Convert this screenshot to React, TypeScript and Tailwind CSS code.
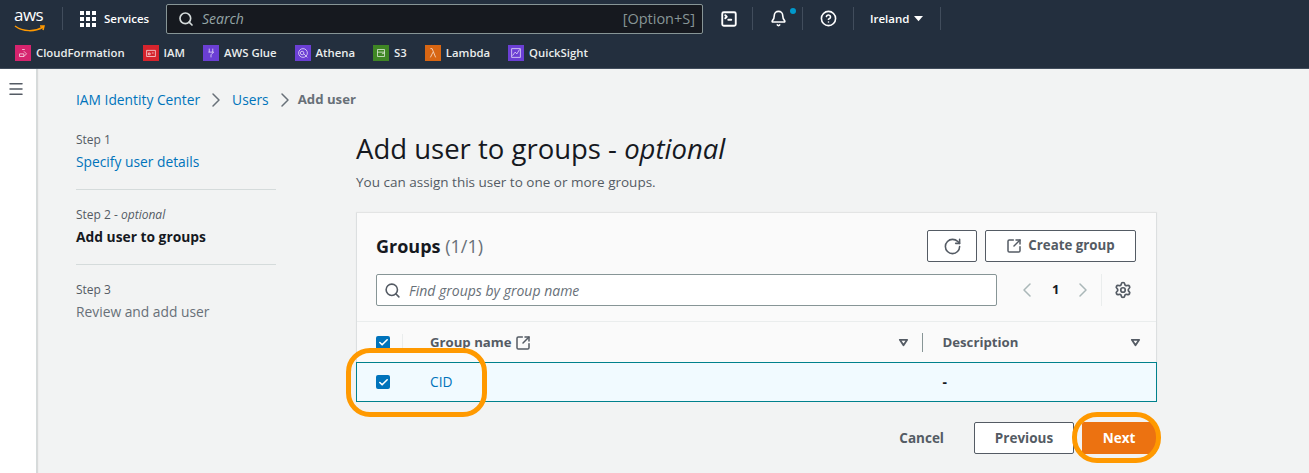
import {
  Bell,
  ChevronLeft,
  ChevronRight,
  CircleHelp,
  Check,
  Menu,
  RotateCw,
  Search,
  Settings,
  SquareArrowOutUpRight,
  SquareTerminal,
} from "lucide-react";

const favorites = [
  { name: "CloudFormation", bg: "bg-[#d6246e]", glyph: "M4 9h5v3H4zM9 6l3 3-3 3M7 4h3" },
  { name: "IAM", bg: "bg-[#d6242d]", glyph: "M3 5h10v7H3zM5 8h2v2H5zM9 8h2" },
  { name: "AWS Glue", bg: "bg-[#6b3fd4]", glyph: "M6 3v4M10 3v4M5 7h6l-3 3v3" },
  { name: "Athena", bg: "bg-[#6b3fd4]", glyph: "M8 3a5 5 0 1 0 0 10 5 5 0 0 0 0-10M7 6a2 2 0 1 0 0 4 2 2 0 0 0 0-4M9 9l4 4" },
  { name: "S3", bg: "bg-[#3f8624]", glyph: "M4 4h8v8H4zM4 7h8M9 9l3-1" },
  { name: "Lambda", bg: "bg-[#d86613]", glyph: "M5 3h2l4 10M8 7l-3 6" },
  { name: "QuickSight", bg: "bg-[#6b3fd4]", glyph: "M3 3h10v10H3zM4 11l3-4 2 2 3-5" },
];

const Triangle = ({ className }: { className: string }) => (
  <svg viewBox="0 0 12 10" className={className} fill="none" stroke="currentColor" strokeWidth="2">
    <path d="M2 2h8L6 8z" strokeLinejoin="round" />
  </svg>
);

const Checked = () => (
  <span className="flex size-[14px] items-center justify-center rounded-[2px] bg-[#0073bb]">
    <Check size={11} strokeWidth={3.5} className="text-white" />
  </span>
);

const Crumb = () => <ChevronRight size={24} strokeWidth={1.5} className="mx-[4px] text-[#687078]" />;

const Divider = () => <div className="h-[23px] w-px bg-[#414d5c]" />;

const steps = [
  { label: "Step 1", title: "Specify user details", tone: "text-[#0073bb]" },
  { label: "Step 2", optional: true, title: "Add user to groups", tone: "font-bold text-[#16191f]" },
  { label: "Step 3", title: "Review and add user", tone: "text-[#687078]" },
];

export default function App() {
  return (
    <div className="flex h-[473px] w-[1309px] flex-col overflow-hidden bg-[#f2f3f3] font-['Open_Sans',sans-serif] text-[13.8px] text-[#16191f]">
      <header className="h-[69px] shrink-0 border-b border-[#414d5c] bg-[#232f3e] text-white">
        <div className="flex h-[37px] items-center">
          <div className="relative ml-[14px] h-[30px] w-[32px]">
            <span className="absolute left-0 top-[1px] text-[17px] leading-[20px] tracking-[-0.5px]">aws</span>
            <svg viewBox="0 0 32 10" className="absolute left-0 top-[20px] w-[32px]" fill="none">
              <path d="M1 2c8 6 20 6 28 1M26 2h4l-1 4" stroke="#ff9900" strokeWidth="1.5" />
            </svg>
          </div>
          <div className="ml-[16px] h-[23px] w-px bg-[#414d5c]" />
          <div className="ml-[17px] grid size-[16px] grid-cols-3 gap-[2px]">
            {Array.from({ length: 9 }).map((_, i) => (
              <span key={i} className="bg-white" />
            ))}
          </div>
          <span className="ml-[8px] w-[45px] text-[11.5px] font-semibold">Services</span>
          <div className="ml-[17px] flex h-[30px] w-[537px] items-center rounded-[2px] border border-[#879596] bg-[#16191f] pl-[11px] pr-[7px]">
            <Search size={16} strokeWidth={2.5} className="text-[#d5dbdb]" />
            <span className="ml-[8px] text-[14px] italic text-[#95a5a6]">Search</span>
            <span className="ml-auto text-[14.5px] text-[#879596]">[Option+S]</span>
          </div>
          <SquareTerminal size={18} strokeWidth={2.5} className="ml-[17px]" />
          <div className="ml-[14px]"><Divider /></div>
          <div className="relative ml-[17px]">
            <Bell size={17} strokeWidth={2.25} />
            <span className="absolute -right-[9px] -top-[2px] size-[6px] rounded-full bg-[#0099cc]" />
          </div>
          <div className="ml-[15px]"><Divider /></div>
          <CircleHelp size={17} strokeWidth={2.25} className="ml-[17px]" />
          <div className="ml-[16px]"><Divider /></div>
          <span className="ml-[16px] text-[11.5px] font-semibold">Ireland</span>
          <svg viewBox="0 0 10 8" className="ml-[5px] w-[9px]" fill="white">
            <path d="M0 1h10L5 7z" />
          </svg>
          <div className="ml-[17px]"><Divider /></div>
        </div>
        <div className="flex h-[31px] items-center pl-[15px] pt-[1px]">
          {favorites.map((f) => (
            <div key={f.name} className="mr-[18px] flex items-center gap-[5px]">
              <span className={`flex size-[16px] items-center justify-center ${f.bg}`}>
                <svg viewBox="0 0 16 16" className="size-[14px]" fill="none" stroke="#ffffff" strokeOpacity="0.75" strokeWidth="1">
                  <path d={f.glyph} />
                </svg>
              </span>
              <span className="text-[11.35px] font-semibold text-[#eaeded]">{f.name}</span>
            </div>
          ))}
        </div>
      </header>

      <div className="flex min-h-0 flex-1">
        <aside className="w-[37px] shrink-0 border-r border-[#d5dbdb] bg-white pl-[7px] pt-[11px] shadow-[1px_0_1px_rgba(0,0,0,0.1)]">
          <Menu size={18} strokeWidth={2} className="text-[#545b64]" />
        </aside>

        <main className="relative flex-1 pl-[39px]">
          <nav className="mt-[19px] flex h-[24px] items-center">
            <span className="text-[#0073bb]">IAM Identity Center</span>
            <Crumb />
            <span className="text-[#0073bb]">Users</span>
            <Crumb />
            <span className="-ml-[3px] text-[13.2px] font-bold text-[#687078]">Add user</span>
          </nav>

          <div className="flex">
            <ol className="w-[200px] shrink-0 pt-[19px]">
              {steps.map((s, i) => (
                <li key={s.label} className={i < 2 ? "mb-[16px] h-[59px] border-b border-[#d5dbdb]" : ""}>
                  <div className="h-[18px] text-[12px] leading-[18px] text-[#545b64]">
                    {s.label}
                    {s.optional && (
                      <>
                        {" - "}
                        <em>optional</em>
                      </>
                    )}
                  </div>
                  <div className={`mt-[2px] leading-[22px] ${s.tone}`}>{s.title}</div>
                </li>
              ))}
            </ol>

            <section className="ml-[80px] w-[801px]">
              <h1 className="mt-[19px] text-[27.5px] leading-[36px]">
                Add user to groups - <em>optional</em>
              </h1>
              <p className="mt-[6px] text-[13.5px] leading-[18px] text-[#545b64]">You can assign this user to one or more groups.</p>

              <div className="mt-[22px] border-l border-r border-[#dcdfe0] shadow-[0_-1px_1px_rgba(0,0,0,0.06)]">
                <div className="h-[109px] border-b border-[#eaeded] bg-[#fafafa] pl-[19px] pr-[20px] pt-[17px]">
                  <div className="flex h-[32px] items-center">
                    <h2 className="text-[18px] font-bold">
                      Groups <span className="font-normal text-[#687078]">(1/1)</span>
                    </h2>
                    <button className="ml-auto flex h-[32px] w-[50px] items-center justify-center rounded-[2px] border border-[#545b64] bg-white">
                      <RotateCw size={19} strokeWidth={2} className="text-[#545b64]" />
                    </button>
                    <button className="ml-[8px] flex h-[32px] w-[151px] items-center justify-center gap-[6px] rounded-[2px] border border-[#545b64] bg-white text-[13.3px] font-bold text-[#545b64]">
                      <SquareArrowOutUpRight size={16} strokeWidth={2.25} />
                      Create group
                    </button>
                  </div>
                  <div className="mt-[12px] flex h-[32px] items-center">
                    <div className="flex h-[32px] w-[621px] items-center rounded-[2px] border border-[#879596] bg-white pl-[7px]">
                      <Search size={17} strokeWidth={2.25} className="text-[#545b64]" />
                      <span className="ml-[8px] text-[14px] italic text-[#687078]">Find groups by group name</span>
                    </div>
                    <ChevronLeft size={24} strokeWidth={1.5} className="ml-[18px] text-[#aab7b8]" />
                    <span className="ml-[13px] text-[13px] font-bold">1</span>
                    <ChevronRight size={24} strokeWidth={1.5} className="ml-[12px] text-[#aab7b8]" />
                    <div className="ml-[6px] h-[32px] w-px bg-[#eaeded]" />
                    <Settings size={18} strokeWidth={2.25} className="ml-[12px] text-[#545b64]" />
                  </div>
                </div>

                <div className="flex h-[40px] items-center bg-[#fafafa] pt-[1px] text-[13.2px] font-bold text-[#545b64]">
                  <div className="flex w-[73px] items-center pl-[19px]">
                    <Checked />
                    <div className="ml-[12px] h-[18px] w-px bg-[#eaeded]" />
                  </div>
                  <span>Group name</span>
                  <SquareArrowOutUpRight size={16} strokeWidth={2.25} className="ml-[3px]" />
                  <Triangle className="ml-[367px] w-[11px]" />
                  <div className="ml-[13px] h-[19px] w-px bg-[#879596]" />
                  <span className="ml-[20px]">Description</span>
                  <Triangle className="ml-[112px] w-[11px]" />
                </div>

                <div className="-mx-px flex h-[40px] items-center border border-[#00818c] bg-[#f1faff]">
                  <div className="w-[73px] pl-[19px]">
                    <Checked />
                  </div>
                  <span className="text-[#0073bb]">CID</span>
                  <span className="ml-[490px] font-bold text-[#16191f]">-</span>
                </div>
              </div>

              <div className="mt-[20px] flex h-[32px] items-center justify-end text-[13.5px] font-bold">
                <span className="text-[#545b64]">Cancel</span>
                <button className="ml-[30px] h-[32px] w-[100px] rounded-[2px] border border-[#545b64] bg-white text-[#545b64]">Previous</button>
                <button className="ml-[8px] mr-px h-[32px] w-[74px] rounded-[2px] bg-[#ec7211] text-white">Next</button>
              </div>
            </section>
          </div>

          {/* hand drawn callouts on the screenshot */}
          <div className="absolute left-[309px] top-[279px] h-[69px] w-[141px] rounded-[24px] border-[5px] border-[#ff9900]" />
          <div className="absolute left-[1035px] top-[343px] h-[51px] w-[89px] rounded-[25px] border-[5px] border-[#ff9900]" />
        </main>
      </div>
    </div>
  );
}
